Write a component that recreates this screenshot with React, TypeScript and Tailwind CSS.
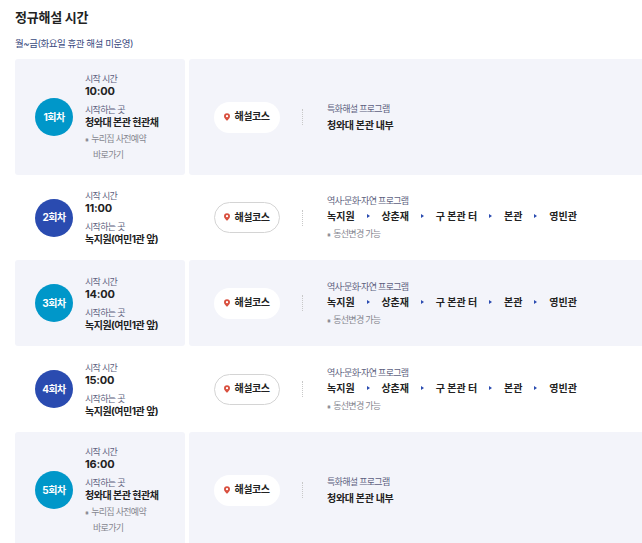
const font = "font-['Inter','Noto_Sans_CJK_KR',sans-serif]";

type Session = {
  label: string;
  time: string;
  place: string;
  height: string;
  reserve?: boolean;
  kind: "special" | "course";
};

const sessions: Session[] = [
  { label: "1회차", time: "10:00", place: "청와대 본관 현관채", height: "h-[116px]", reserve: true, kind: "special" },
  { label: "2회차", time: "11:00", place: "녹지원(여민1관 앞)", height: "h-[85px]", kind: "course" },
  { label: "3회차", time: "14:00", place: "녹지원(여민1관 앞)", height: "h-[86px]", kind: "course" },
  { label: "4회차", time: "15:00", place: "녹지원(여민1관 앞)", height: "h-[86px]", kind: "course" },
  { label: "5회차", time: "16:00", place: "청와대 본관 현관채", height: "h-[116px]", reserve: true, kind: "special" },
];

const stops = ["녹지원", "상춘재", "구 본관 터", "본관", "영빈관"];

function PinIcon() {
  return (
    <svg width="6" height="8" viewBox="0 0 8 10" className="shrink-0">
      <path d="M4 0a4 4 0 0 0-4 4c0 2.6 2.6 4.6 4 6 1.4-1.4 4-3.4 4-6a4 4 0 0 0-4-4z" fill="#d9503f" />
      <circle cx="4" cy="3.9" r="1.5" fill="#fff" />
    </svg>
  );
}

function Arrow() {
  return <span className="h-0 w-0 border-y-[2px] border-l-[3px] border-y-transparent border-l-[#2a4bb0]" />;
}

function Row({ session, shaded }: { session: Session; shaded: boolean }) {
  const bg = shaded ? "bg-[#f3f4fa]" : "bg-white";

  return (
    <div className={`flex gap-1 ${session.height}`}>
      <div className={`flex w-[170px] shrink-0 items-center rounded-[3px] pl-5 ${bg}`}>
        <div
          className={`flex h-[38px] w-[38px] shrink-0 items-center justify-center rounded-full text-[10px] font-bold tracking-[-0.5px] text-white ${
            shaded ? "bg-[#0097c9]" : "bg-[#2a4bb0]"
          }`}
        >
          {session.label}
        </div>
        <div className="ml-3">
          <p className="text-[9px] leading-[12px] tracking-[-0.7px] text-[#5d5f7e]">시작 시간</p>
          <p className="text-[11px] font-bold leading-[12px] tracking-[-0.2px] text-[#222]">{session.time}</p>
          <p className="mt-[7px] text-[9px] leading-[12px] tracking-[-0.7px] text-[#5d5f7e]">시작하는 곳</p>
          <p className="text-[10px] font-bold leading-[12px] tracking-[-0.5px] text-[#222]">{session.place}</p>
          {session.reserve && (
            <div className="mt-[3px] text-[9px] leading-[15px] tracking-[-0.7px] text-[#85868f]">
              <p>
                <span className="mr-[3px] text-[6px] text-[#6b6c75]">※</span>누리집 사전예약
              </p>
              <p className="pl-2">바로가기</p>
            </div>
          )}
        </div>
      </div>
      <div className={`flex min-w-0 flex-1 items-center rounded-l-[3px] ${bg}`}>
        <div
          className={`ml-[25px] flex h-[31px] w-[66px] shrink-0 items-center justify-center gap-1 rounded-full bg-white pb-px text-[10px] font-bold tracking-[-0.4px] text-[#222] ${
            shaded ? "" : "border border-[#d4d4d4]"
          }`}
        >
          <PinIcon />
          해설코스
        </div>
        <div className="ml-[22px] h-4 border-l border-dotted border-[#c8c8c8]" />
        <div className="ml-6 min-w-0 flex-1">
          {session.kind === "special" ? (
            <>
              <p className="text-[9px] leading-[13px] tracking-[-0.7px] text-[#5d5f7e]">특화해설 프로그램</p>
              <p className="mt-[3px] text-[10px] font-bold leading-[14px] tracking-[-0.3px] text-[#222]">청와대 본관 내부</p>
            </>
          ) : (
            <>
              <p className="text-[9px] leading-[13px] tracking-[-0.7px] text-[#5d5f7e]">역사·문화·자연 프로그램</p>
              <div className="mt-[2px] flex w-[250px] items-center justify-between text-[10px] font-bold leading-[14px] text-[#222]">
                {stops.map((stop, i) => (
                  <div key={stop} className="contents">
                    {i > 0 && <Arrow />}
                    <span>{stop}</span>
                  </div>
                ))}
              </div>
              <p className="mt-[4px] text-[9px] leading-[13px] tracking-[-0.7px] text-[#85868f]">
                <span className="mr-[3px] text-[6px] text-[#6b6c75]">※</span>동선변경 가능
              </p>
            </>
          )}
        </div>
      </div>
    </div>
  );
}

export default function App() {
  return (
    <div className={`h-[543px] w-[642px] overflow-hidden bg-white pl-[15px] ${font}`}>
      <h2 className="pt-[7px] text-[13px] font-bold leading-[20px] tracking-[-0.25px] text-[#222]">정규해설 시간</h2>
      <p className="mt-[10px] text-[9.5px] leading-[14px] tracking-[-0.45px] text-[#3a4a80]">월~금(화요일 휴관 해설 미운영)</p>
      <div className="mt-[8px]">
        {sessions.map((session, i) => (
          <Row key={session.label} session={session} shaded={i % 2 === 0} />
        ))}
      </div>
    </div>
  );
}
